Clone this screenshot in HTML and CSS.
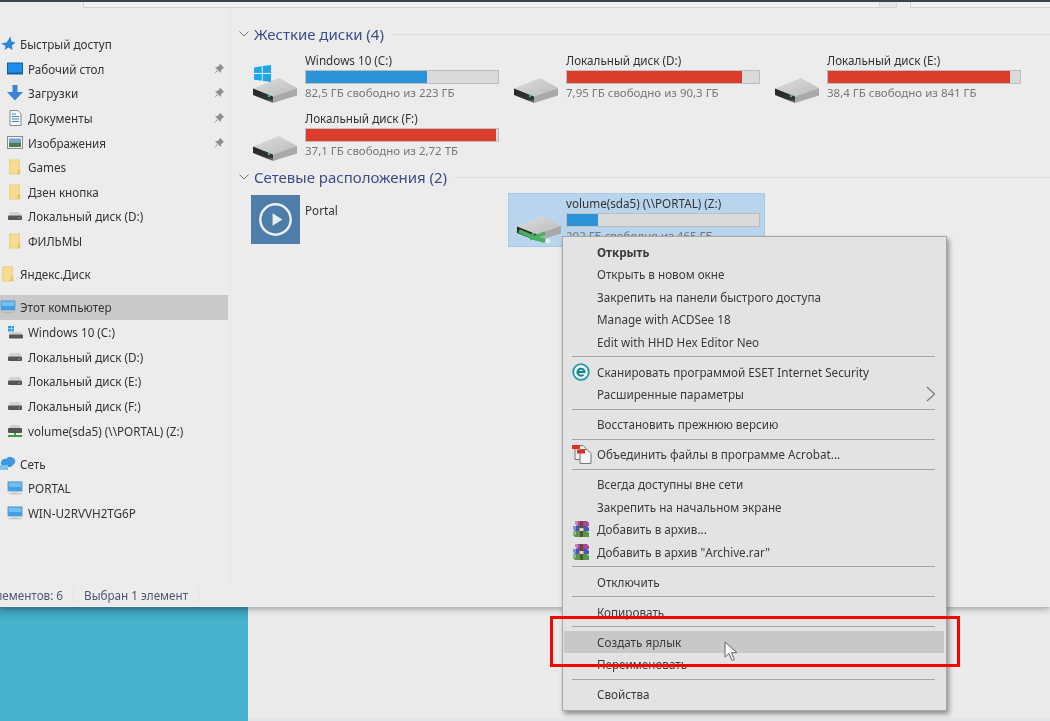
FILE: index.html
```html
<!DOCTYPE html>
<html lang="ru">
<head>
<meta charset="utf-8">
<title>Этот компьютер</title>
<link rel="stylesheet" href="styles.css">
</head>
<body>
<svg class="defs" width="0" height="0" aria-hidden="true">
  <defs>
    <linearGradient id="driveFront" x1="0" y1="0" x2="0" y2="1"><stop offset="0" stop-color="#242424"/><stop offset=".72" stop-color="#343434"/><stop offset="1" stop-color="#858585"/></linearGradient>
    <linearGradient id="driveTop" x1="0" y1="0" x2="1" y2="1"><stop offset="0" stop-color="#dcdcdc"/><stop offset="1" stop-color="#bdbdbd"/></linearGradient>
  </defs>
  <symbol id="drive" viewBox="0 0 44 25">
    <polygon points="0,10.500 26,0 44,10 20,18.500" fill="url(#driveTop)"/>
    <polygon points="20,18.500 44,10 44,17.500 20,25" fill="#a9a9a9"/>
    <polygon points="0,10.500 20,18.500 20,25 0,17" fill="url(#driveFront)"/>
    <circle cx="16" cy="18" r="1.200" fill="#3fbf62"/>
  </symbol>
  <symbol id="hdd" viewBox="0 0 16 10">
    <path d="M1 4.500 3.500 1h9L15 4.500z" fill="#d2d2d2"/>
    <rect x="1" y="4.500" width="14" height="4.500" rx="1" fill="#555"/>
    <rect x="11" y="6.500" width="2" height="1" fill="#62c46f"/>
  </symbol>
  <symbol id="folder" viewBox="0 0 16 18">
    <path d="M2 1h11v16H2z" fill="#f6dc8e" stroke="#e6c469" stroke-width=".7"/>
    <rect x="11" y="12" width="3" height="5" fill="#e8c263"/>
  </symbol>
  <symbol id="pin" viewBox="0 0 12 12">
    <path d="M7 0.800 11.200 5 9.800 5.600 8 7.600 7.800 10 2 4.200 4.400 4 6.400 2.200zM4 7.200.8 11.200 4.800 8z" fill="#8e8e8e"/>
  </symbol>
  <symbol id="monitor" viewBox="0 0 18 16">
    <rect x="1" y="1" width="16" height="10.500" fill="#3d9fe6" stroke="#8aa2b5" stroke-width=".8"/>
    <rect x="2" y="2" width="14" height="5" fill="#6fc0f2"/>
    <rect x="6" y="12" width="6" height="1" fill="#b9c4cc"/>
    <rect x="2" y="14" width="14" height="1" fill="#a9b5be"/>
  </symbol>
  <symbol id="rar" viewBox="0 0 18 18">
    <polygon points="3,1 15,1 17,3 17,6 5,6 3,4" fill="#a8459c"/>
    <polygon points="1,6 15,6 17,8 17,11 3,11 1,9" fill="#4a55b8"/>
    <polygon points="1,11 15,11 17,13 17,17 3,17 1,15" fill="#4c9a4a"/>
    <path d="M1 7h3M1 9h3M1 12h3M1 14h3M3 2h3M3 4h3" stroke="#eee" stroke-width=".8"/>
    <rect x="8" y="1" width="3" height="16" fill="#6b4a2a"/>
    <rect x="7.500" y="8" width="4" height="3" fill="#e6d9b0"/>
  </symbol>
</svg>
<div class="page">
  <div class="scene">
    <div class="window">
      <div class="topbar">
        <div class="address"></div>
        <div class="refresh"></div>
        <div class="search"></div>
      </div>
      <div class="content">
        <nav class="sidebar">
          <div class="row top"><svg class="ic" viewBox="0 0 16 16"><path d="M10.500 .5 11.500 5.500 15.500 6.500 12 9.500 12.500 14 8.500 11.500 4.500 14 5.500 10 1 7.500 6.500 6.500z" fill="#2f86d6"/></svg><span>Быстрый доступ</span></div>
          <div class="row"><svg class="ic" viewBox="0 0 16 14"><rect x=".5" y="1" width="15" height="11" fill="#1f8bea" stroke="#14609f"/><rect x=".5" y="10.500" width="15" height="1.500" fill="#145f9e"/></svg><span>Рабочий стол</span><svg class="pin"><use href="#pin"/></svg></div>
          <div class="row"><svg class="ic" viewBox="0 0 16 16"><path d="M5.500 0h5v7H16l-8 8.500L0 7h5.500z" fill="#3a86d4"/></svg><span>Загрузки</span><svg class="pin"><use href="#pin"/></svg></div>
          <div class="row"><svg class="ic" viewBox="0 0 16 16"><path d="M3 .5h8l3 3v12H3z" fill="#f4f4f4" stroke="#8b8b8b"/><path d="M5 4h4M5 6.500h7M5 9h7M5 11.500h7" stroke="#3f8ed0"/></svg><span>Документы</span><svg class="pin"><use href="#pin"/></svg></div>
          <div class="row"><svg class="ic" viewBox="0 0 16 14"><rect x=".5" y=".5" width="15" height="12" fill="#eef3f6" stroke="#8a8a8a"/><rect x="2" y="2.500" width="12" height="4" fill="#6fa9d8"/><rect x="2" y="6.500" width="12" height="4.500" fill="#4b7a55"/></svg><span>Изображения</span><svg class="pin"><use href="#pin"/></svg></div>
          <div class="row"><svg class="ic"><use href="#folder"/></svg><span>Games</span></div>
          <div class="row"><svg class="ic"><use href="#folder"/></svg><span>Дзен кнопка</span></div>
          <div class="row"><svg class="ic"><use href="#hdd"/></svg><span>Локальный диск (D:)</span></div>
          <div class="row"><svg class="ic"><use href="#folder"/></svg><span>ФИЛЬМЫ</span></div>
          <div class="row top gap"><svg class="ic"><use href="#folder"/></svg><span>Яндекс.Диск</span></div>
          <div class="row top gap active"><svg class="ic"><use href="#monitor"/></svg><span>Этот компьютер</span></div>
          <div class="row"><svg class="ic" viewBox="0 0 16 14"><path d="M1 1h3v2.500H1zM4.500 1H7v2.500H4.500zM1 4h3v2.500H1zM4.500 4H7v2.500H4.500z" fill="#27a3e6"/><path d="M3 7h11l2 3v3H2V9z" fill="#cfcfcf"/><rect x="2" y="9.500" width="14" height="4" rx="1" fill="#555"/></svg><span>Windows 10 (C:)</span></div>
          <div class="row"><svg class="ic"><use href="#hdd"/></svg><span>Локальный диск (D:)</span></div>
          <div class="row"><svg class="ic"><use href="#hdd"/></svg><span>Локальный диск (E:)</span></div>
          <div class="row"><svg class="ic"><use href="#hdd"/></svg><span>Локальный диск (F:)</span></div>
          <div class="row"><svg class="ic" viewBox="0 0 16 14"><path d="M2 4 4 1h8l2 3z" fill="#cfcfcf"/><rect x="1" y="4" width="14" height="5" rx="1" fill="#555"/><path d="M7 9h2v2h6v2H1v-2h6z" fill="#3aa33f"/></svg><span>volume(sda5) (\\PORTAL) (Z:)</span></div>
          <div class="row top gap"><svg class="ic" viewBox="0 0 16 16"><path d="M6 3a5 5 0 0 1 9 4l-4 4H4A4 4 0 0 1 6 3z" fill="#3d9ae0"/><rect x="0" y="9" width="8" height="5" fill="#7cc2ef"/></svg><span>Сеть</span></div>
          <div class="row"><svg class="ic"><use href="#monitor"/></svg><span>PORTAL</span></div>
          <div class="row"><svg class="ic"><use href="#monitor"/></svg><span>WIN-U2RVVH2TG6P</span></div>
        </nav>
        <main class="main">
          <h2 class="head"><svg class="chev" viewBox="0 0 10 6"><path d="M.5.5 5 5 9.500.5" fill="none" stroke="#777"/></svg><span>Жесткие диски (4)</span><i class="rule"></i></h2>
          <div class="tiles">
            <div class="tile">
              <svg class="flag" viewBox="0 0 17 17"><path d="M0 2.500 7.800 1.300v6.800H0zM8.800 1.100 17 0v8.100H8.800zM0 9h7.800v6.800L0 14.700zM8.800 9H17v8l-8.200-1.100z" fill="#1fa7ee"/></svg>
              <svg class="drive"><use href="#drive"/></svg>
              <div class="name">Windows 10 (C:)</div>
              <div class="bar"><div class="fill" style="width:63%"></div></div>
              <div class="size">82,5 ГБ свободно из 223 ГБ</div>
            </div>
            <div class="tile">
              <svg class="drive"><use href="#drive"/></svg>
              <div class="name">Локальный диск (D:)</div>
              <div class="bar"><div class="fill red" style="width:91%"></div></div>
              <div class="size">7,95 ГБ свободно из 90,3 ГБ</div>
            </div>
            <div class="tile">
              <svg class="drive"><use href="#drive"/></svg>
              <div class="name">Локальный диск (E:)</div>
              <div class="bar"><div class="fill red" style="width:95%"></div></div>
              <div class="size">38,4 ГБ свободно из 841 ГБ</div>
            </div>
            <div class="tile">
              <svg class="drive"><use href="#drive"/></svg>
              <div class="name">Локальный диск (F:)</div>
              <div class="bar"><div class="fill red" style="width:99%"></div></div>
              <div class="size">37,1 ГБ свободно из 2,72 ТБ</div>
            </div>
          </div>
          <h2 class="head"><svg class="chev" viewBox="0 0 10 6"><path d="M.5.5 5 5 9.500.5" fill="none" stroke="#777"/></svg><span>Сетевые расположения (2)</span><i class="rule"></i></h2>
          <div class="tiles net">
            <div class="tile portal">
              <div class="thumb"><svg viewBox="0 0 50 50"><circle cx="25" cy="25" r="15.500" fill="none" stroke="#e9eef2" stroke-width="2.500"/><path d="M22 18.500 32 25l-10 6.500z" fill="#e9eef2"/></svg></div>
              <div class="name">Portal</div>
            </div>
            <div class="tile selected">
              <svg class="drive"><use href="#drive"/></svg>
              <svg class="link" viewBox="0 0 36 16"><path d="M13 11 28 5" fill="none" stroke="#46b05a" stroke-width="3"/><path d="M2 3 18 10l10 3" fill="none" stroke="#46b05a" stroke-width="4"/><circle cx="31" cy="13" r="2.500" fill="#e6eef0"/></svg>
              <div class="name">volume(sda5) (\\PORTAL) (Z:)</div>
              <div class="bar"><div class="fill" style="width:16%"></div></div>
              <div class="size">202 ГБ свободно из 465 ГБ</div>
            </div>
          </div>
        </main>
      </div>
      <footer class="status">
        <span class="count">Элементов: 6</span>
        <span class="picked">Выбран 1 элемент</span>
      </footer>
    </div>
    <div class="desk">
      <div class="teal"></div>
      <div class="paper"></div>
    </div>
    <div class="menu">
      <div class="item strong"><i class="slot"></i>Открыть</div>
      <div class="item"><i class="slot"></i>Открыть в новом окне</div>
      <div class="item"><i class="slot"></i>Закрепить на панели быстрого доступа</div>
      <div class="item"><i class="slot"></i>Manage with ACDSee 18</div>
      <div class="item"><i class="slot"></i>Edit with HHD Hex Editor Neo</div>
      <div class="sep"></div>
      <div class="item"><i class="slot"><svg class="mi" viewBox="0 0 18 18"><circle cx="9" cy="9" r="7.800" fill="#eef5f5" stroke="#1f9aa6" stroke-width="1.800"/><path d="M5.500 9h7a3.500 3.500 0 1 0-1 2.600" fill="none" stroke="#14838f" stroke-width="2"/></svg></i>Сканировать программой ESET Internet Security</div>
      <div class="item"><i class="slot"></i>Расширенные параметры<svg class="more" viewBox="0 0 10 16"><path d="M1 1l7.500 7L1 15" fill="none" stroke="#777" stroke-width="1.200"/></svg></div>
      <div class="sep"></div>
      <div class="item"><i class="slot"></i>Восстановить прежнюю версию</div>
      <div class="sep"></div>
      <div class="item"><i class="slot"><svg class="mi wide" viewBox="0 0 20 20"><path d="M3 1.500h8l3 3v11H3z" fill="#ededed" stroke="#777"/><path d="M8 5.500h7l4 4v10H8z" fill="#f5f5f5" stroke="#777"/><rect x="0" y="1" width="8" height="4" fill="#d8322c"/><rect x="5" y="5.500" width="8" height="4" fill="#d8322c"/></svg></i>Объединить файлы в программе Acrobat...</div>
      <div class="sep"></div>
      <div class="item"><i class="slot"></i>Всегда доступны вне сети</div>
      <div class="item"><i class="slot"></i>Закрепить на начальном экране</div>
      <div class="item"><i class="slot"><svg class="mi"><use href="#rar"/></svg></i>Добавить в архив...</div>
      <div class="item"><i class="slot"><svg class="mi"><use href="#rar"/></svg></i>Добавить в архив "Archive.rar"</div>
      <div class="sep"></div>
      <div class="item"><i class="slot"></i>Отключить</div>
      <div class="sep"></div>
      <div class="item"><i class="slot"></i>Копировать</div>
      <div class="sep"></div>
      <div class="item hover"><i class="slot"></i>Создать ярлык</div>
      <div class="item"><i class="slot"></i>Переименовать</div>
      <div class="sep"></div>
      <div class="item"><i class="slot"></i>Свойства</div>
    </div>
    <svg class="cursor" viewBox="0 0 14 21"><path d="M1 1v15l4-3.500 3 7 2.500-1-3-6.800H13z" fill="#fafafa" stroke="#666" stroke-width="1"/></svg>
  </div>
  <div class="frame"></div>
</div>
</body>
</html>
```
FILE: styles.css
```css
* { box-sizing: border-box; }
html, body { margin: 0; padding: 0; }
body {
  width: 1050px;
  height: 721px;
  overflow: hidden;
  font-family: "Noto Sans", "Open Sans", sans-serif;
  font-size: 11.700px;
  color: #333;
  background: #ebebeb;
}
.defs { position: absolute; }
.page { position: relative; width: 1050px; height: 721px; overflow: hidden; }
.scene {
  position: relative;
  display: flex;
  flex-direction: column;
  height: 721px;
  filter: blur(0.45px);
}

/* Explorer window */
.window {
  position: relative;
  z-index: 1;
  display: flex;
  flex-direction: column;
  height: 607px;
  background: #ececec;
  box-shadow: 0 1px 8px rgba(0, 0, 0, .4);
}
.topbar {
  display: flex;
  height: 8px;
  flex: none;
  padding-left: 83px;
  border-top: 2px solid #3c444d;
  background: #ededed;
}
.address { width: 797px; height: 6px; background: #f2f2f2; border: 1px solid #d4d4d4; border-top: 0; }
.refresh { width: 17px; height: 6px; margin-right: 13px; background: #e6e6e6; border: 1px solid #d4d4d4; border-top: 0; border-left: 0; }
.search { flex: 1; height: 6px; background: #f2f2f2; border: 1px solid #d4d4d4; border-top: 0; border-right: 0; }
.content { display: flex; flex: 1; min-height: 0; }

/* Navigation pane */
.sidebar {
  flex: none;
  width: 231px;
  padding: 23.700px 2px 0 0;
  border-right: 1px solid #e6e6e6;
}
.row {
  display: flex;
  align-items: center;
  gap: 5px;
  height: 24.650px;
  padding: 0 3px 0 7px;
  white-space: nowrap;
}
.row.top { gap: 4px; padding-left: 0; }
.row.gap { margin-top: 8.500px; }
.row.active { background: #c9c9c9; }
.ic { flex: none; width: 16px; height: 16px; }
.pin { flex: none; width: 12px; height: 12px; margin-left: auto; }

/* Drives */
.main { flex: 1; min-width: 0; padding: 16px 0 0 8px; }
.head {
  display: flex;
  align-items: center;
  gap: 5px;
  height: 20px;
  margin: 0;
  font-size: 15px;
  font-weight: 400;
  color: #3f4c8c;
  white-space: nowrap;
}
.chev { width: 10px; height: 6px; flex: none; }
.rule { flex: 1; height: 1px; margin-left: 3px; background: #dcdcdc; }
.tiles {
  display: grid;
  grid-template-columns: repeat(3, 257px);
  grid-auto-rows: 58px;
  column-gap: 4px;
  margin: 9px 0 -2px 8px;
}
.tile {
  position: relative;
  padding-left: 58px;
  height: 58px;
}
.drive { position: absolute; left: 6px; top: 25px; width: 44px; height: 25px; }
.flag { position: absolute; left: 7px; top: 12px; width: 17px; height: 17px; z-index: 1; }
.name { height: 15px; line-height: 15px; white-space: nowrap; color: #333; }
.bar {
  width: 194px;
  height: 14px;
  margin: 2px 0 1px;
  background: #dadada;
  border: 1px solid #bdbdbd;
}
.fill { height: 100%; background: #2a94d6; }
.fill.red { background: #da3d2b; }
.size { height: 15px; line-height: 15px; font-size: 11.500px; white-space: nowrap; color: #777; }

.net { margin-top: 6px; grid-auto-rows: 54px; }
.net .tile { height: 54px; padding-top: 3px; overflow: hidden; }
.net .drive { left: 9px; top: 23px; }
.selected { background: #b9d5ee; box-shadow: inset 0 0 0 1px #a9cbe8; }
.link { position: absolute; left: 9px; top: 35px; width: 36px; height: 16px; }
.portal .name { margin-top: 7px; }
.thumb { position: absolute; left: 4px; top: 2px; width: 49px; height: 49px; background: #4d7da8; }
.thumb svg { display: block; width: 49px; height: 49px; }

/* Status bar */
.status {
  display: flex;
  align-items: center;
  height: 24px;
  flex: none;
  white-space: nowrap;
  color: #4f5677;
}
.count { margin-left: -12px; padding-right: 10px; border-right: 1px solid #e2e2e2; }
.picked { margin-left: 10px; padding-right: 10px; border-right: 1px solid #e2e2e2; }

/* Below the window */
.desk { display: flex; flex: 1; }
.teal { width: 248px; background: linear-gradient(#3f9db5, #46b2cc 14px); }
.paper { flex: 1; background: #ebebeb; border-bottom: 3px solid #e2e7ea; }

/* Context menu */
.menu {
  position: absolute;
  z-index: 2;
  left: 562px;
  top: 236px;
  width: 385px;
  height: 475px;
  padding: 3.500px 2px 0 1px;
  background: #e3e3e3;
  border: 1px solid #a8a8a8;
  box-shadow: 2px 3px 5px rgba(0, 0, 0, .4);
  color: #3a3a3a;
}
.item {
  display: flex;
  align-items: center;
  height: 22.500px;
  padding-left: 8px;
  white-space: nowrap;
}
.item.strong { font-weight: 700; }
.item.hover { background: #c8c8c8; }
.slot { display: flex; align-items: center; flex: none; width: 25px; }
.mi { display: block; width: 18px; height: 18px; }
.mi.wide { width: 20px; height: 20px; }
.more { width: 10px; height: 16px; margin-left: auto; margin-right: 8px; }
.sep { height: 7.500px; padding: 3px 9px 0 8px; }
.sep::before { content: ""; display: block; height: 1px; background: #a6a6a6; }

.cursor { position: absolute; z-index: 3; left: 724px; top: 641px; width: 14px; height: 21px; }

/* Annotation drawn over the screenshot */
.frame {
  position: absolute;
  z-index: 4;
  left: 550px;
  top: 616px;
  width: 410px;
  height: 51px;
  border: 3px solid #f00;
}
```
